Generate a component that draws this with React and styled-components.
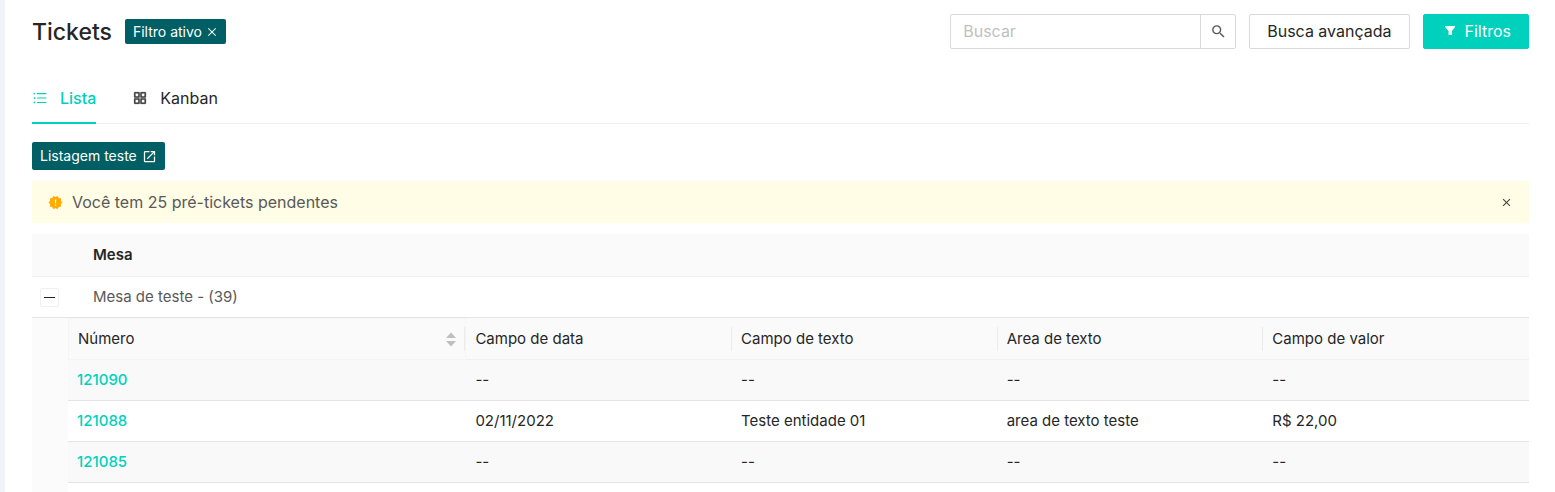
import { useState } from "react";
import styled, { createGlobalStyle } from "styled-components";
import {
  AiOutlineAppstore,
  AiOutlineClose,
  AiOutlineUnorderedList,
} from "react-icons/ai";
import { MdClose, MdNewReleases, MdOpenInNew, MdSearch } from "react-icons/md";

const tickets = [
  { number: "121090" },
  {
    number: "121088",
    date: "02/11/2022",
    text: "Teste entidade 01",
    area: "area de texto teste",
    value: "R$ 22,00",
  },
  { number: "121085" },
];

const columns = [
  { key: "date", title: "Campo de data" },
  { key: "text", title: "Campo de texto" },
  { key: "area", title: "Area de texto" },
  { key: "value", title: "Campo de valor" },
];

export default function App() {
  const [tab, setTab] = useState("lista");

  return (
    <Page>
      <GlobalStyle />
      <Header>
        <Title>Tickets</Title>
        <FilterTag type="button">
          Filtro ativo
          <AiOutlineClose size={12} />
        </FilterTag>
        <Actions>
          <SearchForm role="search" onSubmit={(e) => e.preventDefault()}>
            <SearchInput type="text" placeholder="Buscar" aria-label="Buscar" />
            <SearchButton type="submit" aria-label="Buscar">
              <MdSearch size={17} />
            </SearchButton>
          </SearchForm>
          <Button type="button">Busca avançada</Button>
          <Button type="button" $primary>
            <FunnelIcon />
            Filtros
          </Button>
        </Actions>
      </Header>

      <Tabs role="tablist">
        <Tab
          role="tab"
          aria-selected={tab === "lista"}
          $active={tab === "lista"}
          onClick={() => setTab("lista")}
        >
          <AiOutlineUnorderedList size={16} />
          Lista
        </Tab>
        <Tab
          role="tab"
          aria-selected={tab === "kanban"}
          $active={tab === "kanban"}
          onClick={() => setTab("kanban")}
        >
          <BoardIcon size={16} />
          Kanban
        </Tab>
      </Tabs>

      <ListingButton type="button">
        Listagem teste
        <MdOpenInNew size={15} />
      </ListingButton>

      <Notice role="status">
        <MdNewReleases size={15} color="#ffab00" />
        <p>Você tem 25 pré-tickets pendentes</p>
        <IconButton type="button" aria-label="Fechar">
          <MdClose size={13} />
        </IconButton>
      </Notice>

      <GroupTable>
        <colgroup>
          <ToggleCol />
          <col />
        </colgroup>
        <thead>
          <tr>
            <GroupHead />
            <GroupHead scope="col">Mesa</GroupHead>
          </tr>
        </thead>
        <tbody>
          <tr>
            <ToggleCell>
              <CollapseButton type="button" aria-label="Recolher" />
            </ToggleCell>
            <GroupCell>Mesa de teste - (39)</GroupCell>
          </tr>
          <tr>
            <NestedCell colSpan={2}>
              <TicketTable />
            </NestedCell>
          </tr>
        </tbody>
      </GroupTable>
    </Page>
  );
}

function TicketTable() {
  return (
    <NestedBody>
      <NestedTable>
        <colgroup>
          <NumberCol />
          <col span={4} />
        </colgroup>
        <thead>
          <tr>
            <SortableHead scope="col">
              <HeadLabel>
                Número
                <Sorter type="button" aria-label="Ordenar">
                  <SortIcon />
                </Sorter>
              </HeadLabel>
            </SortableHead>
            {columns.map((column) => (
              <TicketHead key={column.key} scope="col">
                <HeadLabel>{column.title}</HeadLabel>
              </TicketHead>
            ))}
          </tr>
        </thead>
        <tbody>
          {tickets.map((ticket) => (
            <TicketRow key={ticket.number}>
              <td>
                <TicketLink href={`#${ticket.number}`}>{ticket.number}</TicketLink>
              </td>
              {columns.map((column) => (
                <td key={column.key}>{ticket[column.key] ?? "--"}</td>
              ))}
            </TicketRow>
          ))}
        </tbody>
      </NestedTable>
    </NestedBody>
  );
}

function FunnelIcon() {
  return (
    <svg width="13" height="13" viewBox="0 0 13 13" fill="currentColor" aria-hidden="true">
      <path d="M2 2h10v1L9 7v4H5.500V7L2 3z" />
    </svg>
  );
}

function SortIcon() {
  return (
    <svg width="10" height="15" viewBox="0 0 10 15" fill="currentColor" aria-hidden="true">
      <path d="M5 0.500L10 6H0z" />
      <path d="M0 9h10L5 14.500z" />
    </svg>
  );
}

const GlobalStyle = createGlobalStyle`
  *, *::before, *::after {
    box-sizing: border-box;
  }

  body {
    margin: 0;
    background-color: #fff;
    color: #262626;
    font-family: Inter, "Liberation Sans", sans-serif;
    font-size: 15px;
    line-height: 24px;
  }

  button, input {
    margin: 0;
    font: inherit;
  }

  button {
    cursor: pointer;
  }

  svg {
    flex-shrink: 0;
  }
`;

const Page = styled.main`
  min-height: 100vh;
  padding: 14px 26px 0 27px;
  border-left: 5px solid #f2f3f9;
`;

const Header = styled.header`
  display: flex;
  align-items: center;
  height: 35px;
`;

const Title = styled.h1`
  margin: 0 13px 0 0;
  font-size: 23px;
  font-weight: 500;
  line-height: 32px;
`;

const FilterTag = styled.button`
  display: flex;
  align-items: center;
  gap: 4px;
  height: 25px;
  padding: 0 8px;
  border: none;
  border-radius: 2px;
  background-color: #005f64;
  color: #fff;
  font-size: 14px;
`;

const Actions = styled.div`
  display: flex;
  gap: 13px;
  margin-left: auto;
`;

const SearchForm = styled.form`
  display: flex;
  width: 286px;
  height: 35px;
  border: 1px solid #d9d9d9;
  border-radius: 2px;
`;

const SearchInput = styled.input`
  flex: 1;
  min-width: 0;
  padding: 0 12px 2px;
  border: none;
  outline: none;
  background-color: transparent;
  font-size: 16px;

  &::placeholder {
    color: #bfbfbf;
  }
`;

const SearchButton = styled.button`
  display: flex;
  align-items: center;
  justify-content: center;
  width: 35px;
  padding: 0;
  border: none;
  border-left: 1px solid #d9d9d9;
  background-color: transparent;
  color: #595959;
`;

const Button = styled.button`
  display: flex;
  align-items: center;
  gap: 9px;
  height: 35px;
  padding: 0 17px 2px;
  border: 1px solid ${(props) => (props.$primary ? "#00d1bc" : "#d9d9d9")};
  border-radius: 2px;
  background-color: ${(props) => (props.$primary ? "#00d1bc" : "#fff")};
  color: ${(props) => (props.$primary ? "#fff" : "#262626")};
  font-size: 16px;

  & svg {
    margin-left: 2px;
  }
`;

const Tabs = styled.div`
  display: flex;
  gap: 36px;
  height: 50px;
  margin-top: 25px;
  border-bottom: 1px solid #f0f0f0;
`;

const Tab = styled.button`
  display: flex;
  align-items: center;
  gap: 12px;
  height: 50px;
  padding: 0;
  border: none;
  border-bottom: 2px solid ${(props) => (props.$active ? "#00d1bc" : "transparent")};
  background-color: transparent;
  color: ${(props) => (props.$active ? "#00d1bc" : "#262626")};
  font-size: 16px;
  font-weight: ${(props) => (props.$active ? 500 : 400)};
`;

const BoardIcon = styled(AiOutlineAppstore)`
  stroke: currentColor;
  stroke-width: 24px;
`;

const ListingButton = styled.button`
  display: flex;
  align-items: center;
  gap: 5px;
  height: 28px;
  margin-top: 18px;
  padding: 0 8px;
  border: none;
  border-radius: 2px;
  background-color: #005f64;
  color: #fff;
  font-size: 14px;
`;

const Notice = styled.div`
  display: flex;
  align-items: center;
  gap: 9px;
  height: 42px;
  margin: 11px 0;
  padding: 0 16px;
  background-color: #fffde5;
  color: #595959;
  font-size: 16px;

  & p {
    flex: 1;
    margin: 0;
  }
`;

const IconButton = styled.button`
  display: flex;
  padding: 0;
  border: none;
  background-color: transparent;
  color: #434343;
`;

const GroupTable = styled.table`
  width: 100%;
  border-spacing: 0;
  table-layout: fixed;
`;

const ToggleCol = styled.col`
  width: 52px;
`;

const GroupHead = styled.th`
  height: 43px;
  padding: 0 9px;
  border-bottom: 1px solid #f0f0f0;
  background-color: #fafafa;
  font-weight: 600;
  text-align: left;
`;

const GroupCell = styled.td`
  height: 41px;
  padding: 0 9px;
  border-bottom: 1px solid #e4e4e4;
  color: #595959;
`;

const ToggleCell = styled(GroupCell)`
  padding: 0 8px;
`;

const CollapseButton = styled.button`
  display: flex;
  align-items: center;
  justify-content: center;
  width: 19px;
  height: 19px;
  padding: 0;
  border: 1px solid #f0f0f0;
  border-radius: 2px;
  background-color: #fff;

  &::before {
    content: "";
    width: 11px;
    height: 1px;
    background-color: #262626;
  }
`;

const NestedCell = styled.td`
  padding: 0 0 0 36px;
  background-color: #fbfbfb;
`;

const NestedBody = styled.div`
  padding-bottom: 9px;
  background-color: #fff;
`;

const NestedTable = styled.table`
  width: 100%;
  border-spacing: 0;
  table-layout: fixed;

  & td {
    height: 41px;
    padding: 0 9px;
    border-bottom: 1px solid #e4e4e4;
  }
`;

const NumberCol = styled.col`
  width: 27.27%;
`;

const TicketHead = styled.th`
  height: 42px;
  padding: 0 0 0 9px;
  border-bottom: 1px solid #f0f0f0;
  background-color: #fafafa;
  font-weight: 400;
  text-align: left;

  &:last-child > div {
    border-right: none;
  }
`;

const SortableHead = styled(TicketHead)`
  border: 1px solid #f5f5f5;
`;

const HeadLabel = styled.div`
  display: flex;
  align-items: center;
  justify-content: space-between;
  height: 24px;
  padding-right: 8px;
  border-right: 1px solid #ebebeb;
`;

const Sorter = styled.button`
  display: flex;
  padding: 0;
  border: none;
  background-color: transparent;
  color: #bfbfbf;
`;

const TicketRow = styled.tr`
  &:nth-child(odd) {
    background-color: #f9f9f9;
  }
`;

const TicketLink = styled.a`
  color: #00d1bc;
  font-weight: 500;
  text-decoration: none;
`;
